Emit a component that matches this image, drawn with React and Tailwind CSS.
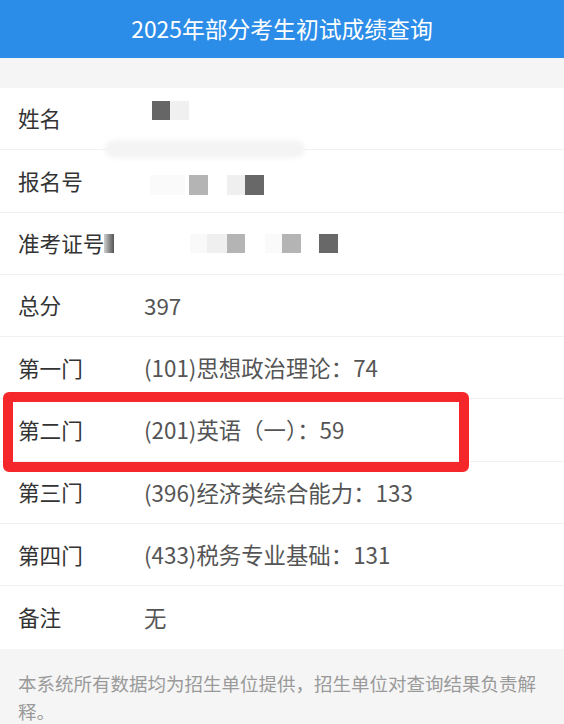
import React from "react";

const font = { fontFamily: '"Noto Sans CJK SC", "Noto Sans", sans-serif' };

function Row({ label, value, children, last }) {
  return (
    <div className={`relative flex h-[62.3px] items-center ${last ? "" : "border-b border-[#f1f1f1]"}`}>
      <div className="flex w-[144px] items-center pl-[18px] text-[21.6px] text-[#333333]">{label}</div>
      {value ? <div className="text-[22.4px] text-[#555555]">{value}</div> : children}
    </div>
  );
}

const B = ({ c, w = "w-[19px]" }) => <div className={`h-[19px] ${w} ${c}`} />;

export default function App() {
  return (
    <div className="relative w-[564px] h-[724px] overflow-hidden bg-white" style={font}>
      <div className="flex h-[58px] items-center justify-center bg-[#2c8de8] text-[22.8px] text-white">
        2025年部分考生初试成绩查询
      </div>
      <div className="h-[30px] bg-[#f5f5f5]" />
      <div className="flex flex-col">
        <Row label="姓名">
          <div className="mb-[17px] ml-[8px] flex">
            <B c="bg-[#666666]" w="w-[18px]" />
            <B c="bg-[#f0f0f0]" />
          </div>
          <div className="absolute left-[105px] top-[52px] h-[18px] w-[200px] rounded-full bg-[#f4f4f4] blur-[2px]" />
        </Row>
        <Row label="报名号">
          <div className="mt-[9px] ml-[6px] flex h-[20px] items-stretch">
            <div className="w-[35px] bg-[#fafafa]" />
            <div className="ml-[4px] w-[19px] bg-[#b4b4b4]" />
            <div className="ml-[19px] w-[18px] bg-[#efefef]" />
            <div className="w-[19px] bg-[#686868]" />
          </div>
        </Row>
        <Row
          label={
            <>
              <span>准考证号</span>
              <span className="h-[19px] w-[10px] bg-gradient-to-r from-[#d0d0d0] to-[#555555]" />
            </>
          }
        >
          <div className="ml-[46px] flex">
            <B c="bg-[#f9f9f9]" w="w-[17px]" />
            <B c="bg-[#efefef]" w="w-[20px]" />
            <B c="bg-[#b4b4b4]" w="w-[18px]" />
            <div className="w-[20px]" />
            <B c="bg-[#fafafa]" w="w-[17px]" />
            <B c="bg-[#b4b4b4]" />
            <div className="w-[18px]" />
            <B c="bg-[#686868]" />
          </div>
        </Row>
        <Row label="总分" value="397" />
        <Row label="第一门" value="(101)思想政治理论：74" />
        <Row label="第二门" value="(201)英语（一）：59" />
        <Row label="第三门" value="(396)经济类综合能力：133" />
        <Row label="第四门" value="(433)税务专业基础：131" />
        <Row label="备注" value="无" last />
      </div>
      <div className="h-full bg-[#f5f5f5] px-[18px] pt-[20px] text-[18.5px] leading-[28px] text-[#9a9a9a]">
        本系统所有数据均为招生单位提供，招生单位对查询结果负责解释。
      </div>
      <div className="absolute left-[3px] top-[392px] h-[80px] w-[466px] rounded-[6px] border-[10px] border-[#f5272b]" />
    </div>
  );
}
